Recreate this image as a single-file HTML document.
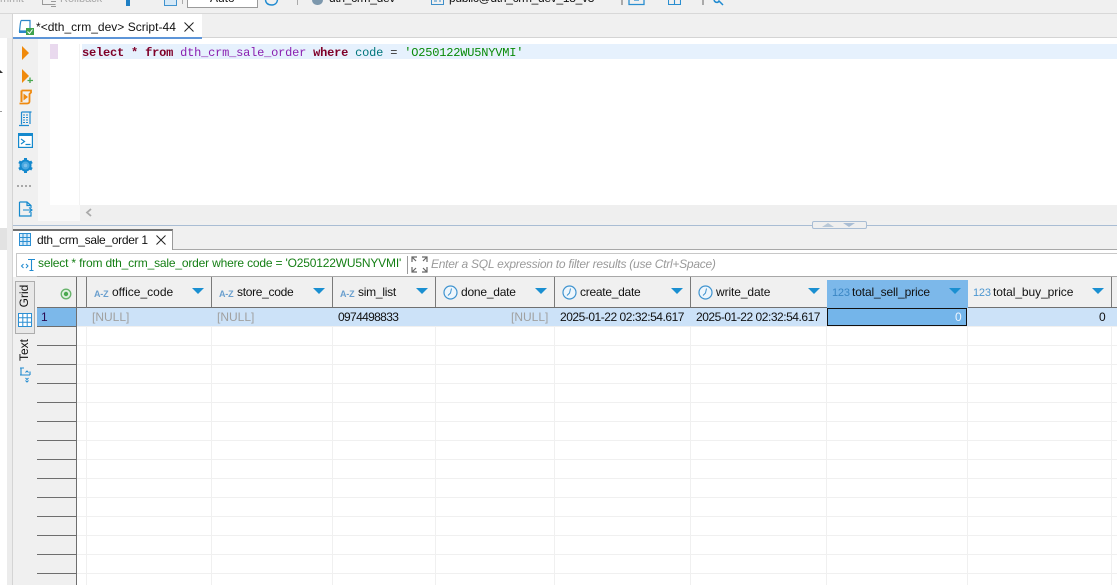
<!DOCTYPE html>
<html><head><meta charset="utf-8"><style>
html,body{margin:0;padding:0;width:1117px;height:585px;overflow:hidden;background:#fff}
body{position:relative;font-family:"Liberation Sans",sans-serif;font-size:12px;color:#111}
.a{position:absolute}
.t{position:absolute;white-space:nowrap;line-height:16px}
.mono{font-family:"Liberation Mono",monospace;font-size:12px;letter-spacing:-.2px;line-height:15px;white-space:pre;position:absolute;top:46px;left:82px;color:#333}
.k{color:#7f0028;font-weight:bold}.tb{color:#8a1fb0}.c{color:#00767c}.s{color:#088a08}
.hl{position:absolute;left:37px;width:39px;height:1px;background:#6e6e6e}
.gl{position:absolute;left:77px;right:0;height:1px;background:#f0f0f0}
.vl{position:absolute;top:327px;bottom:0;width:1px;background:#f0f0f0}
.ar{position:absolute;top:288px;width:0;height:0;border-left:6px solid transparent;border-right:6px solid transparent;border-top:6px solid #1a8fd1}
.ty{position:absolute;top:288px;font-size:9px;font-weight:bold;line-height:12px;color:#6a9fce;letter-spacing:-.2px}
.num{position:absolute;top:287px;font-size:11px;line-height:12px;color:#4c96d0;letter-spacing:-.2px}
.n{color:#a0a0a0}
</style></head><body>
<!-- outer -->
<div class="a" style="left:0;top:0;width:1117px;height:14px;background:#f0f0f0;border-bottom:1px solid #d8d8d8;box-sizing:border-box"></div>
<div class="a" style="left:0;top:14px;width:13px;height:24px;background:#f0f0f0"></div>
<div class="a" style="left:0;top:38px;width:7px;height:547px;background:#fff"></div>
<div class="a" style="left:0;top:13px;width:7px;height:1px;background:#d8d8d8"></div>
<div class="a" style="left:0;top:228px;width:7px;height:22px;background:#e2e2e2"></div>
<div class="a" style="left:7px;top:38px;width:5px;height:547px;background:#ececec"></div>
<div class="a" style="left:12px;top:14px;width:1px;height:571px;background:#d4d4d4"></div>
<div class="a" style="left:0;top:70px;width:0;height:0;border-left:3px solid #333;border-top:3px solid transparent;border-bottom:0"></div>
<div class="a" style="left:0;top:111px;width:2px;height:1px;background:#999"></div>
<!-- top clipped toolbar -->
<div class="t" style="left:0;top:-9px;color:#a8a8a8;font-size:11px">mmit</div>
<svg class="a" style="left:41px;top:0" width="16" height="8"><path d="M1.500 0V4.500H14.500M10 1.500H15M10 6.500H15" fill="none" stroke="#999"/></svg>
<div class="t" style="left:60px;top:-9px;color:#a8a8a8;font-size:11px">Rollback</div>
<div class="a" style="left:126px;top:0;width:4px;height:6px;background:#1f7fc4"></div>
<div class="a" style="left:164px;top:0;width:11px;height:5px;border:1px solid #3f93cf;border-top:0;box-sizing:content-box;background:#d5e8f6"></div>
<div class="a" style="left:182px;top:0;width:1px;height:4px;background:#aaa"></div>
<div class="a" style="left:187px;top:-2px;width:71px;height:10px;background:#fff;border:1px solid #9a9a9a;box-sizing:border-box"></div>
<div class="t" style="left:210px;top:-10px;font-size:12px">Auto</div>
<svg class="a" style="left:264px;top:0" width="15" height="6"><path d="M1.500 0C2 4 5 5 8 5S13 3 13.500 0" fill="none" stroke="#1f8ad0" stroke-width="1.400"/></svg>
<div class="a" style="left:297px;top:0;width:1px;height:5px;background:#aaa"></div>
<div class="a" style="left:312px;top:0;width:11px;height:5px;background:#7d98ad;border-radius:0 0 5px 5px"></div>
<div class="t" style="left:329px;top:-10px;font-size:12px;letter-spacing:-.3px">dth_crm_dev</div>
<svg class="a" style="left:431px;top:0" width="13" height="6"><path d="M.5 0V4.500H12.500V0" fill="none" stroke="#3f8fc9"/><path d="M3 1H6M8 1H10" stroke="#3f8fc9"/></svg>
<div class="t" style="left:449px;top:-10px;font-size:12px;letter-spacing:-.3px">public@dth_crm_dev_18_v3</div>
<div class="a" style="left:621px;top:0;width:2px;height:5px;background:#aaa"></div>
<svg class="a" style="left:628px;top:0" width="18" height="6"><path d="M1 0V4.500H16V0M6 0H11" fill="none" stroke="#2a8ed0" stroke-width="1.300"/></svg>
<svg class="a" style="left:668px;top:0" width="13" height="6"><path d="M.5 0V4.500H12.500V0M6.500 0V4.500" fill="none" stroke="#2a8ed0" stroke-width="1.100"/></svg>
<div class="a" style="left:702px;top:0;width:2px;height:5px;background:#aaa"></div>
<svg class="a" style="left:713px;top:0" width="12" height="6"><path d="M1 0C2 3 5 3 6 1L10 5" fill="none" stroke="#1f8ad0" stroke-width="1.500"/></svg>
<!-- tab strip -->
<div class="a" style="left:13px;top:14px;width:1104px;height:24px;background:#f0f0f0;border-bottom:1px solid #d4d4d4;box-sizing:border-box"></div>
<div class="a" style="left:13px;top:14px;width:189px;height:25px;background:#fff;border-bottom:2px solid #5d95d8;box-sizing:border-box"></div>
<svg class="a" style="left:18px;top:19px" width="16" height="16"><path d="M3 1.500H12V11M3 1.500C2 5 2 9 1.500 12H10" fill="none" stroke="#2c87c9" stroke-width="1.200"/><rect x="1" y="12" width="9" height="2" fill="#2c87c9"/><rect x="8" y="9" width="8" height="7" fill="#3fa34d"/><path d="M9.500 12.500L11.500 14.500L14.500 10.500" stroke="#fff" fill="none"/></svg>
<div class="t" style="left:36px;top:19px;font-size:12px;letter-spacing:.02px">*&lt;dth_crm_dev&gt; Script-44</div>
<svg class="a" style="left:184px;top:22px" width="10" height="10"><path d="M.5 .5L9.500 9.500M9.500 .5L.5 9.500" stroke="#222"/></svg>
<!-- editor -->
<div class="a" style="left:13px;top:39px;width:25px;height:186px;background:#f0f0f0"></div>
<div class="a" style="left:38px;top:39px;width:12px;height:182px;background:#f8f8f8"></div>
<div class="a" style="left:50px;top:44px;width:8px;height:15px;background:#e9d9ee"></div>
<div class="a" style="left:79px;top:44px;width:1px;height:161px;background:#f2f2f2"></div>
<div class="a" style="left:50px;top:205px;width:30px;height:16px;background:#f8f8f8"></div>
<div class="a" style="left:82px;top:44px;right:0;height:15px;background:#e6f1fd"></div>
<div class="mono"><span class="k">select</span> <span class="k">*</span> <span class="k">from</span> <span class="tb">dth_crm_sale_order</span> <span class="k">where</span> <span class="c">code</span> = <span class="s">'O250122WU5NYVMI'</span></div>
<div class="a" style="left:80px;top:205px;right:0;height:16px;background:#efefef"></div>
<svg class="a" style="left:85px;top:208px" width="7" height="9"><path d="M6 1L2 4.500L6 8" fill="none" stroke="#aaa" stroke-width="1.800"/></svg>
<!-- sidebar icons -->
<svg class="a" style="left:18px;top:44px" width="16" height="40"><path d="M4 2L11 9L4 16Z" fill="#f08a0c"/><path d="M4 25L11 32L4 39Z" fill="#f08a0c"/><path d="M12 33.500V39M9.500 36.500H15" stroke="#4aa84f" stroke-width="1.300"/></svg>
<svg class="a" style="left:18px;top:89px" width="15" height="16"><path d="M3.500 1.500H13V3.500L11.500 5V12.500C11.500 14 10 14.500 9 14.500H1.500" fill="none" stroke="#ef8a10" stroke-width="1.800"/><path d="M3.500 1.500V13" fill="none" stroke="#ef8a10" stroke-width="2"/><path d="M5.500 4.500L10 8L5.500 11.500Z" fill="#ef8a10"/></svg>
<svg class="a" style="left:18px;top:111px" width="15" height="16"><path d="M3.500 1H13.500M12 1V13M3.500 1V13.500M1 14.500H11" fill="none" stroke="#1f8ad0" stroke-width="1.200"/><path d="M5 4H10.500M5 6.500H10.500M5 9H10.500M5 11.500H10.500" stroke="#1f8ad0" stroke-dasharray="2 1"/></svg>
<svg class="a" style="left:18px;top:133px" width="15" height="15"><rect x=".6" y=".6" width="13.800" height="13.800" fill="#fff" stroke="#1589cd" stroke-width="1.200"/><rect x="1" y="1" width="13" height="2" fill="#1589cd"/><path d="M3 6L6.500 8.500L3 11M7.500 11.500H12.500" fill="none" stroke="#1589cd" stroke-width="1.200"/></svg>
<svg class="a" style="left:18px;top:158px" width="15" height="15"><circle cx="7.500" cy="7.500" r="5" fill="#4aa8e0" stroke="#1589cd" stroke-width="2"/><circle cx="7.500" cy="7.500" r="1.800" fill="#7cc0ea"/><path d="M7.500 0V2.500M7.500 12.500V15M1 3.800L3.200 5M11.800 10L14 11.200M14 3.800L11.800 5M3.200 10L1 11.200" stroke="#1589cd" stroke-width="3"/></svg>
<div class="a" style="left:17px;top:185px;width:15px;height:2px;background:repeating-linear-gradient(90deg,#a8a8a8 0 2px,transparent 2px 4px)"></div>
<svg class="a" style="left:18px;top:201px" width="15" height="16"><path d="M1.500 1H9L13 4.500V7M9 1V4.500H13M13 11V15H1.500V1" fill="none" stroke="#1589cd" stroke-width="1.200"/><path d="M5 9H14M11 6.500L14 9L11 11.500" fill="none" stroke="#1589cd" stroke-width="1.100"/></svg>
<!-- sash -->
<div class="a" style="left:13px;top:221px;right:0;height:29px;background:#f0f0f0;border-bottom:1px solid #a8a8a8;box-sizing:border-box"></div>
<div class="a" style="left:13px;top:225px;right:0;height:1px;background:#a9bdd4"></div>
<div class="a" style="left:812px;top:221px;width:55px;height:8px;background:#efefef;border:1px solid #a9bdd4;border-radius:2px;box-sizing:border-box"></div>
<div class="a" style="left:822px;top:223px;width:0;height:0;border-left:6px solid transparent;border-right:6px solid transparent;border-bottom:4px solid #b8c8d8"></div>
<div class="a" style="left:843px;top:223px;width:0;height:0;border-left:6px solid transparent;border-right:6px solid transparent;border-top:4px solid #a9bdd4"></div>
<!-- result tab -->
<div class="a" style="left:13px;top:229px;width:160px;height:21px;background:#fff;border-right:1px solid #999;border-top:2px solid #707070;box-sizing:border-box"></div>
<svg class="a" style="left:19px;top:233px" width="12" height="13"><path d="M.5 .5H11.500V12.500H.5ZM.5 4.500H11.500M.5 8.500H11.500M4 .5V12.500M8 .5V12.500" fill="#d8ecfa" stroke="#2b8fd3"/></svg>
<div class="t" style="left:37px;top:232px;font-size:12px;letter-spacing:-.3px">dth_crm_sale_order 1</div>
<svg class="a" style="left:156px;top:235px" width="10" height="10"><path d="M.5 .5L9.500 9.500M9.500 .5L.5 9.500" stroke="#222"/></svg>
<!-- filter -->
<div class="a" style="left:16px;top:253px;right:0;height:24px;background:#fff;border:1px solid #c8c8c8;border-right:0;box-sizing:border-box"></div>
<svg class="a" style="left:20px;top:258px" width="16" height="14"><path d="M8 1.500H15M11.500 1.500V12.500M9.500 12.500H13.500" fill="none" stroke="#1f8ad0" stroke-width="1.100"/><path d="M3.500 6L1.500 8L3.500 10M6 6L8 8L6 10" fill="none" stroke="#1f8ad0"/></svg>
<div class="t" style="left:38px;top:255px;color:#157f15;font-size:12px;letter-spacing:-.18px">select * from dth_crm_sale_order where code = 'O250122WU5NYVMI'</div>
<div class="a" style="left:407px;top:256px;width:1px;height:18px;background:#999"></div>
<svg class="a" style="left:411px;top:256px" width="17" height="17"><path d="M1 6V1H6M1 1L5 5M11 1H16V6M16 1L12 5M1 11V16H6M1 16L5 12M16 11V16H11M16 16L12 12" fill="none" stroke="#666" stroke-width="1.200"/></svg>
<div class="t" style="left:431px;top:256px;color:#9a9a9a;font-style:italic;font-size:12px;letter-spacing:-.25px">Enter a SQL expression to filter results (use Ctrl+Space)</div>
<!-- grid left tabs -->
<div class="a" style="left:13px;top:277px;width:24px;height:308px;background:#f0f0f0"></div>
<div class="a" style="left:15px;top:281px;width:20px;height:53px;background:#e8e8e8;border:1px solid #adadad;box-sizing:border-box"></div>
<div class="t" style="left:24px;top:296px;transform:translate(-50%,-50%) rotate(-90deg);font-size:12px">Grid</div>
<svg class="a" style="left:18px;top:313px" width="14" height="14"><path d="M.5 .5H13.500V13.500H.5ZM.5 4.800H13.500M.5 9.200H13.500M4.800 .5V13.500M9.200 .5V13.500" fill="#fff" stroke="#2b8fd3"/></svg>
<div class="t" style="left:24px;top:350px;transform:translate(-50%,-50%) rotate(-90deg);font-size:12px">Text</div>
<svg class="a" style="left:19px;top:367px" width="12" height="16"><path d="M1 1H5M2 1V8M1 8H11M11 4.500V8" fill="none" stroke="#1f8ad0" stroke-width="1.100"/><path d="M6.500 5.500L8 4L9.500 5.500M6.500 11L8 12.500L9.500 11M6.500 13.500L8 15L9.500 13.500" fill="none" stroke="#1f8ad0"/></svg>
<!-- grid -->
<div class="a" style="left:37px;top:277px;width:39px;height:308px;background:#f0f0f0"></div>
<div class="a" style="left:37px;top:277px;right:0;height:31px;background:#f0f0f0"></div>
<div class="a" style="left:37px;top:276px;right:0;height:1px;background:#a8a8a8"></div>
<div class="a" style="left:37px;top:307px;right:0;height:1px;background:#707070"></div>
<svg class="a" style="left:60px;top:288px" width="12" height="12"><circle cx="6" cy="6" r="4.800" fill="#dff0df" stroke="#66b36a" stroke-width="1.300"/><circle cx="6" cy="6" r="2.200" fill="#4aa84f"/></svg>
<div class="a" style="left:76px;top:277px;width:1px;height:308px;background:#6e6e6e"></div>
<div class="a" style="left:86px;top:277px;width:1px;height:31px;background:#7a7a7a"></div>
<div class="a" style="left:77px;top:308px;right:0;height:18px;background:#cce2f8"></div>
<div class="a" style="left:37px;top:308px;width:39px;height:18px;background:#7cb8ea"></div>
<div class="t" style="left:41px;top:309px;color:#2a0a50;font-size:12px">1</div>
<!-- grid lines -->
<div class="vl" style="left:86px"></div><div class="vl" style="left:211px"></div><div class="vl" style="left:332px"></div><div class="vl" style="left:435px"></div><div class="vl" style="left:554px"></div><div class="vl" style="left:690px"></div><div class="vl" style="left:826px"></div><div class="vl" style="left:967px"></div><div class="vl" style="left:1111px"></div>
<div class="gl" style="top:326px"></div><div class="gl" style="top:345px"></div><div class="gl" style="top:364px"></div><div class="gl" style="top:383px"></div><div class="gl" style="top:402px"></div><div class="gl" style="top:421px"></div><div class="gl" style="top:440px"></div><div class="gl" style="top:459px"></div><div class="gl" style="top:478px"></div><div class="gl" style="top:497px"></div><div class="gl" style="top:516px"></div><div class="gl" style="top:535px"></div><div class="gl" style="top:554px"></div><div class="gl" style="top:573px"></div>
<div class="hl" style="top:326px"></div><div class="hl" style="top:345px"></div><div class="hl" style="top:364px"></div><div class="hl" style="top:383px"></div><div class="hl" style="top:402px"></div><div class="hl" style="top:421px"></div><div class="hl" style="top:440px"></div><div class="hl" style="top:459px"></div><div class="hl" style="top:478px"></div><div class="hl" style="top:497px"></div><div class="hl" style="top:516px"></div><div class="hl" style="top:535px"></div><div class="hl" style="top:554px"></div><div class="hl" style="top:573px"></div>
<!-- column separators -->
<div class="a" style="left:211px;top:277px;width:1px;height:30px;background:#7a7a7a"></div>
<div class="a" style="left:332px;top:277px;width:1px;height:30px;background:#7a7a7a"></div>
<div class="a" style="left:435px;top:277px;width:1px;height:30px;background:#7a7a7a"></div>
<div class="a" style="left:554px;top:277px;width:1px;height:30px;background:#7a7a7a"></div>
<div class="a" style="left:690px;top:277px;width:1px;height:30px;background:#7a7a7a"></div>
<div class="a" style="left:1111px;top:277px;width:1px;height:30px;background:#7a7a7a"></div>
<div class="a" style="left:827px;top:280px;width:141px;height:28px;background:#7cb8ea"></div>
<!-- header labels -->
<div class="ty" style="left:94px">A-Z</div><div class="t" style="left:112px;top:284px">office_code</div><div class="ar" style="left:192px"></div>
<div class="ty" style="left:219px">A-Z</div><div class="t" style="left:237px;top:284px;letter-spacing:-.3px">store_code</div><div class="ar" style="left:313px"></div>
<div class="ty" style="left:340px">A-Z</div><div class="t" style="left:358px;top:284px;letter-spacing:-.25px">sim_list</div><div class="ar" style="left:416px"></div>
<svg class="a" style="left:443px;top:285px" width="15" height="15"><circle cx="7.500" cy="7.500" r="6.500" fill="#eef6fc" stroke="#3f93cf" stroke-width="1.200"/><path d="M8.500 3.500L7.500 8L5 10.500" fill="none" stroke="#3f93cf"/></svg><div class="t" style="left:461px;top:284px;letter-spacing:-.22px">done_date</div><div class="ar" style="left:535px"></div>
<svg class="a" style="left:562px;top:285px" width="15" height="15"><circle cx="7.500" cy="7.500" r="6.500" fill="#eef6fc" stroke="#3f93cf" stroke-width="1.200"/><path d="M8.500 3.500L7.500 8L5 10.500" fill="none" stroke="#3f93cf"/></svg><div class="t" style="left:580px;top:284px;letter-spacing:-.27px">create_date</div><div class="ar" style="left:671px"></div>
<svg class="a" style="left:698px;top:285px" width="15" height="15"><circle cx="7.500" cy="7.500" r="6.500" fill="#eef6fc" stroke="#3f93cf" stroke-width="1.200"/><path d="M8.500 3.500L7.500 8L5 10.500" fill="none" stroke="#3f93cf"/></svg><div class="t" style="left:716px;top:284px;letter-spacing:-.1px">write_date</div><div class="ar" style="left:808px"></div>
<div class="num" style="left:832px;color:#3a86c4">123</div><div class="t" style="left:852px;top:284px;letter-spacing:-.13px">total_sell_price</div><div class="ar" style="left:949px"></div>
<div class="num" style="left:973px">123</div><div class="t" style="left:993px;top:284px;letter-spacing:-.07px">total_buy_price</div><div class="ar" style="left:1092px"></div>
<!-- row -->
<div class="t n" style="left:92px;top:309px">[NULL]</div>
<div class="t n" style="left:217px;top:309px">[NULL]</div>
<div class="t" style="left:338px;top:309px;letter-spacing:-.65px">0974498833</div>
<div class="t n" style="left:511px;top:309px">[NULL]</div>
<div class="t" style="left:560px;top:309px;letter-spacing:-.47px">2025-01-22 02:32:54.617</div>
<div class="t" style="left:696px;top:309px;letter-spacing:-.47px">2025-01-22 02:32:54.617</div>
<div class="a" style="left:827px;top:308px;width:140px;height:18px;background:#74b5ea;border:1px solid #111;box-sizing:border-box"></div>
<div class="t" style="left:955px;top:309px;color:#eef6ff">0</div>
<div class="t" style="left:1099px;top:309px">0</div>
</body></html>
